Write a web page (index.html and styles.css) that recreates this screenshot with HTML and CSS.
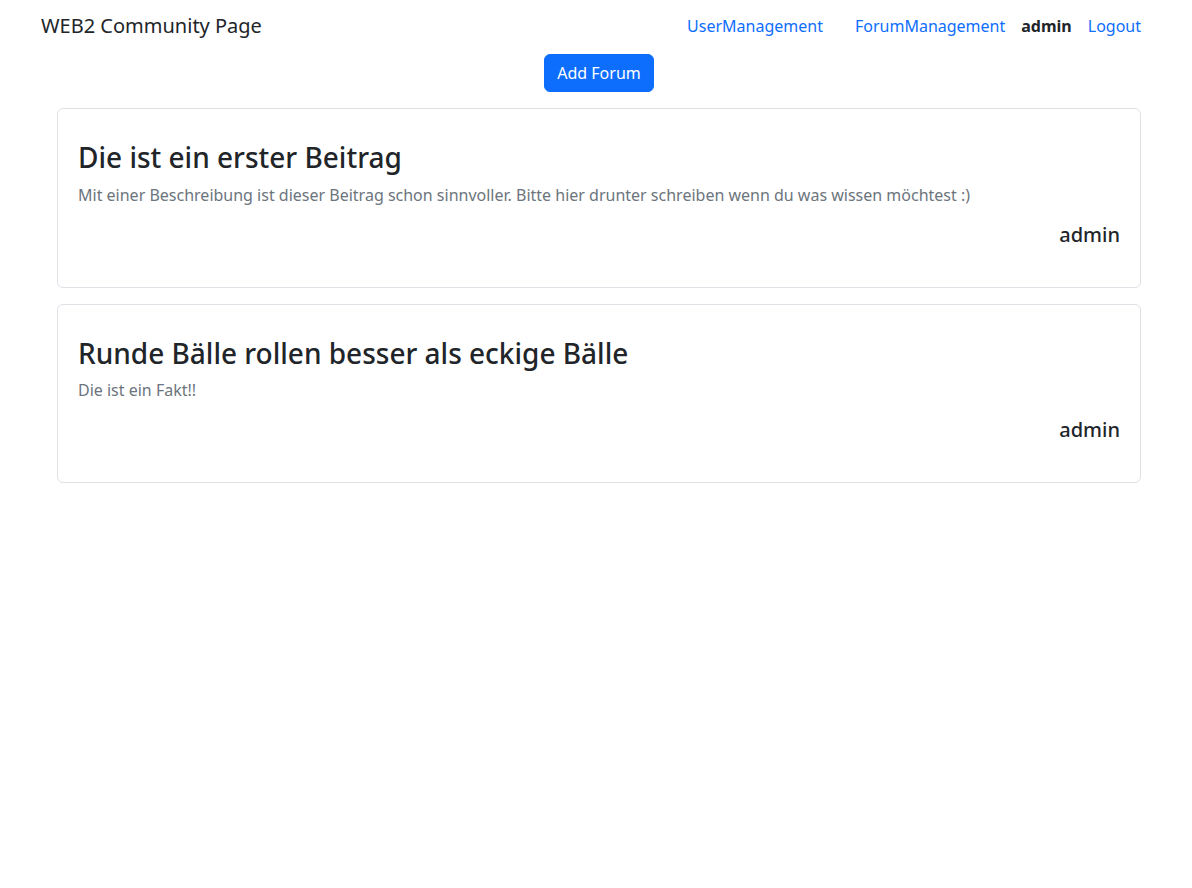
FILE: index.html
```html
<!DOCTYPE html>
<html lang="de">
<head>
<meta charset="utf-8">
<title>WEB2 Community Page</title>
<link rel="stylesheet" href="styles.css">
</head>
<body>
<nav class="navbar">
  <a class="brand" href="#">WEB2 Community Page</a>
  <ul class="nav">
    <li class="nav-item nav-item-wide"><a class="nav-link" href="#">UserManagement</a></li>
    <li class="nav-item"><a class="nav-link" href="#">ForumManagement</a></li>
    <li class="nav-item"><span class="nav-user">admin</span></li>
    <li class="nav-item"><a class="nav-link" href="#">Logout</a></li>
  </ul>
</nav>
<main class="content">
  <div class="actions">
    <button class="btn-primary" type="button">Add Forum</button>
  </div>
  <div class="card">
    <h3 class="card-title">Die ist ein erster Beitrag</h3>
    <p class="card-text">Mit einer Beschreibung ist dieser Beitrag schon sinnvoller. Bitte hier drunter schreiben wenn du was wissen möchtest :)</p>
    <h5 class="card-author">admin</h5>
  </div>
  <div class="card">
    <h3 class="card-title">Runde Bälle rollen besser als eckige Bälle</h3>
    <p class="card-text">Die ist ein Fakt!!</p>
    <h5 class="card-author">admin</h5>
  </div>
</main>
</body>
</html>
```

FILE: styles.css
```css
* { box-sizing: border-box; }
body {
  margin: 0;
  font-family: "Noto Sans", "Liberation Sans", sans-serif;
  font-size: 16px;
  line-height: 1.5;
  color: #212529;
  background: #fff;
}
a { text-decoration: none; }
.navbar {
  display: flex;
  align-items: center;
  justify-content: space-between;
  padding: 6px 43px 6px 41px;
}
.brand {
  font-size: 20px;
  line-height: 30px;
  color: #212529;
  padding: 5px 0;
}
.nav {
  display: flex;
  align-items: center;
  list-style: none;
  margin: 0;
  padding: 0;
}
.nav-link, .nav-user {
  display: block;
  padding: 8px 8px;
  line-height: 24px;
}
.nav-link { color: #0d6efd; }
.nav-user { font-weight: 700; color: #212529; }
.nav-item-wide { margin-right: 16px; }
.content {
  padding: 0 51px 0 57px;
}
.actions {
  display: flex;
  justify-content: center;
  padding-top: 2px;
  margin-bottom: 16px;
}
.btn-primary {
  font-family: inherit;
  font-size: 16px;
  line-height: 24px;
  padding: 6px 12px;
  color: #fff;
  background: #0d6efd;
  border: 1px solid #0d6efd;
  border-radius: 6px;
}
.card {
  border: 1px solid #dee2e6;
  border-radius: 6px;
  padding: 32px 20px 24px;
  margin-bottom: 16px;
}
.card-title {
  margin: 0 0 8px;
  font-size: 28px;
  font-weight: 500;
  line-height: 1.2;
}
.card-text {
  margin: 0 0 16px;
  color: #6c757d;
}
.card-author {
  margin: 0 0 16px;
  text-align: right;
  font-size: 20px;
  font-weight: 500;
  line-height: 1.2;
}
```
